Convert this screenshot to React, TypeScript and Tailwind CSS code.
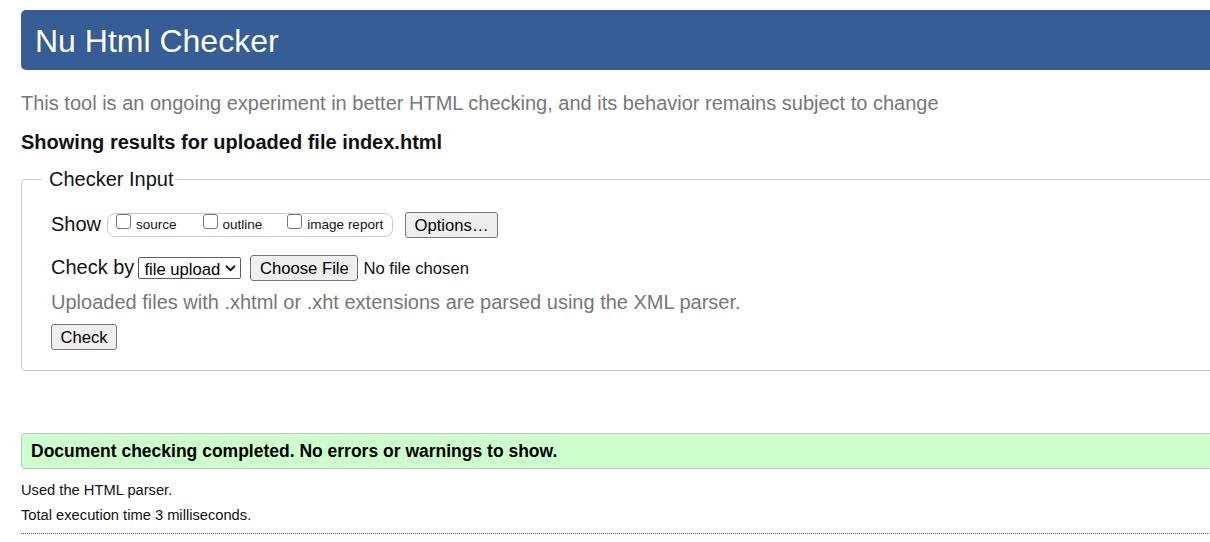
import React from 'react';

/* Nu Html Checker — results page for an uploaded file.
   The page is wider than the window, so the right edges run off-screen. */

const font = "font-['Liberation_Sans',Arial,Helvetica,sans-serif]";

const buttonCls =
  'flex items-center justify-center rounded-[3px] border border-[#767676] bg-[#efefef] text-[16.67px] leading-[19px] text-black';

function ShowOption({ label, className }: { label: string; className?: string }) {
  return (
    <label className={`flex items-start ${className ?? ''}`}>
      <input
        type="checkbox"
        className="h-[15px] w-[15px] shrink-0 appearance-none rounded-[3px] border border-[#767676] bg-white"
      />
      <span className="ml-[5px] mt-[3px] text-[13.5px] leading-[16px]">{label}</span>
    </label>
  );
}

export default function App() {
  return (
    <div className={`h-[542px] w-full overflow-hidden bg-white text-[#111] ${font}`}>
      <div className="w-[1240px] pl-[21px] pt-[10px]">
        <header className="flex h-[60px] items-center rounded-l-[5px] bg-[#365d95] pl-[14px] pt-[2px]">
          <h1 className="text-[32px] font-normal leading-[37px] text-white">Nu Html Checker</h1>
        </header>

        <p className="mt-[22px] text-[20px] leading-[23px] text-[#777]">
          This tool is an ongoing experiment in better HTML checking, and its behavior remains subject to change
        </p>

        <p className="mt-[16px] text-[20px] font-bold leading-[23px]">
          Showing results for uploaded file index.html
        </p>

        <fieldset className="mt-[14px] rounded-[4px] border border-[#ccc]">
          <legend className="ml-[20px] pl-[7px] pr-[1px] text-[20px] leading-[23px]">Checker Input</legend>

          <div className="pb-[20px] pl-[29px] pt-[21px]">
            {/* show row */}
            <div className="flex h-[26px] items-center">
              <span className="mb-[2px] text-[20px] leading-[23px]">Show</span>
              <div className="ml-[6px] flex h-[24px] w-[286px] items-start rounded-[8px] border border-[#ccc] pl-[8px]">
                <ShowOption label="source" />
                <ShowOption label="outline" className="ml-[26px]" />
                <ShowOption label="image report" className="ml-[25px]" />
              </div>
              <button className={`ml-[12px] h-[26px] w-[93px] ${buttonCls}`}>Options…</button>
            </div>

            {/* check by row */}
            <div className="mt-[17px] flex h-[26px] items-center">
              <span className="mb-[1px] text-[20px] leading-[23px]">Check by</span>
              <div className="relative ml-[4px] h-[22px] w-[103px] rounded-[2px] border border-[#5f5f5f] bg-white">
                <select className="h-full w-full appearance-none bg-transparent pl-[5px] text-[16.67px] leading-[19px] text-black outline-none">
                  <option>file upload</option>
                </select>
                <svg
                  viewBox="0 0 12 8"
                  className="pointer-events-none absolute right-[4px] top-[7px] h-[7px] w-[11px]"
                  fill="none"
                  stroke="#111"
                  strokeWidth="2.2"
                  strokeLinecap="round"
                  strokeLinejoin="round"
                >
                  <path d="M1.5 1.5 6 6l4.5-4.5" />
                </svg>
              </div>
              <button className={`ml-[9px] h-[26px] w-[108px] ${buttonCls}`}>Choose File</button>
              <span className="ml-[5px] text-[16.67px] leading-[19px]">No file chosen</span>
            </div>

            <p className="mt-[10px] text-[20px] leading-[23px] text-[#777]">
              Uploaded files with .xhtml or .xht extensions are parsed using the XML parser.
            </p>

            <button className={`mt-[10px] h-[26px] w-[66px] ${buttonCls}`}>Check</button>
          </div>
        </fieldset>

        <div className="mt-[62px] flex h-[36px] items-center rounded-[4px] border border-[#c4c4c4] bg-[#ccffcc] pl-[9px]">
          <p className="text-[17.5px] font-bold leading-[20px] text-black">
            Document checking completed. No errors or warnings to show.
          </p>
        </div>

        <p className="mt-[13px] text-[14.7px] leading-[17px]">Used the HTML parser.</p>
        <p className="mt-[8px] text-[14.7px] leading-[17px]">Total execution time 3 milliseconds.</p>
        <hr className="mt-[9px] border-0 border-t border-dotted border-[#666]" />
      </div>
    </div>
  );
}
